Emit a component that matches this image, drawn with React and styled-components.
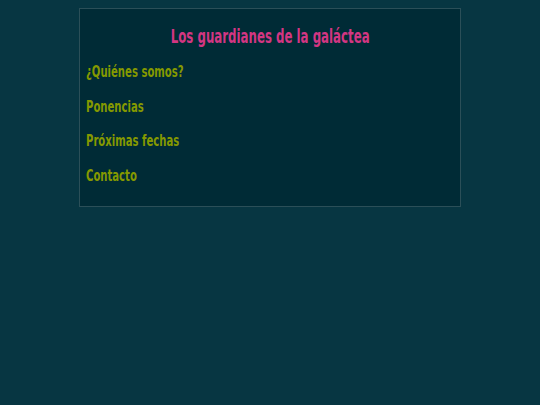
import React from 'react'
import styled, { createGlobalStyle } from 'styled-components';

const GlobalStyle = createGlobalStyle`
    html, body {
        margin: 0;
        padding: 0;
        background: #073642;
        height: 100%;
    }
    body {
        font-family: "Liberation Sans Narrow", "DejaVu Sans Condensed", "Liberation Sans", sans-serif;
    }
`;

const Page = styled('div')`
    padding-top: 8px;
`;

const Panel = styled('div')`
    width: 382px;
    height: 199px;
    margin: 0 auto;
    background: #002b36;
    border: 1px solid #2b4f58;
    padding: 14px 6px 0;
    box-sizing: border-box;
`;

const Title = styled('h1')`
    margin: 0 0 12px;
    text-align: center;
    color: #d33682;
    font-size: 19px;
    font-weight: bold;
    font-stretch: condensed;
    line-height: 26px;
    white-space: nowrap;
`;

// narrow the fallback font to the width of the condensed face in the picture
const Narrow = styled('span')`
    display: inline-block;
    transform: scaleX(${({ scale }) => scale});
    transform-origin: ${({ origin }) => origin};
`;

const Menu = styled('ul')`
    list-style: none;
    margin: 0;
    padding: 0;
`;

const Item = styled('li')`
    height: 34.5px;
    line-height: 22px;
    white-space: nowrap;
`;

const Link = styled('a')`
    color: #859900;
    font-size: 16px;
    font-weight: bold;
    font-stretch: condensed;
    text-decoration: none;
`;

const links = ['¿Quiénes somos?', 'Ponencias', 'Próximas fechas', 'Contacto'];

function App() {
    return (
        <>
            <GlobalStyle />
            <Page>
                <Panel>
                    <Title>
                        <Narrow scale={0.69} origin="center">Los guardianes de la galáctea</Narrow>
                    </Title>
                    <Menu>
                        {links.map((l) => (
                            <Item key={l}>
                                <Link href="#"><Narrow scale={0.7} origin="left">{l}</Narrow></Link>
                            </Item>
                        ))}
                    </Menu>
                </Panel>
            </Page>
        </>
    )
}

export default App
